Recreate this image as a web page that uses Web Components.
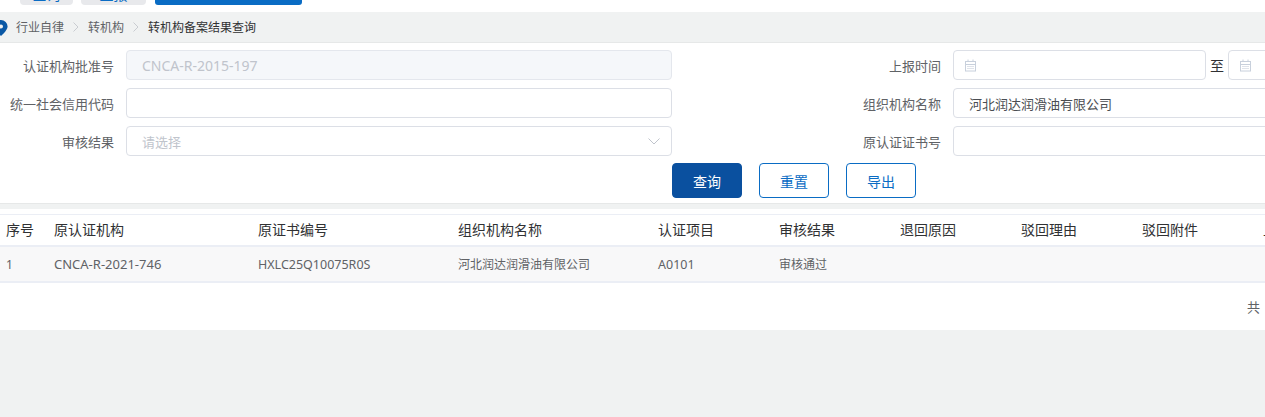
<!DOCTYPE html>
<html lang="zh">
<head>
<meta charset="utf-8">
<title>转机构备案结果查询</title>
<style>
  html, body { margin: 0; padding: 0; height: 100%; overflow: hidden; background: #f0f2f2; }
</style>
</head>
<body>
<result-page></result-page>
<script>
const FONT = '"Noto Sans", "Noto Sans CJK SC", sans-serif';

class TopTabs extends HTMLElement {
  constructor() {
    super();
    this.attachShadow({ mode: "open" }).innerHTML = `
      <style>
        :host { display: flex; height: 12px; background: #fff; padding-left: 20px; overflow: hidden; }
        .tab { display: flex; align-items: flex-end; justify-content: center; width: 53px; height: 5px; margin-right: 8px; overflow: hidden; background: #e8e9ec; border-radius: 0 0 4px 4px; color: #0a6cc4; font-size: 14px; line-height: 14px; white-space: nowrap; }
        .tab.wide { width: 65px; margin-right: 9px; }
        .tab.active { width: 147px; background: #0a6cc4; color: #fff; font-size: 12px; border-radius: 0 0 3px 3px; }
        .tab span { flex: none; margin-bottom: 3px; }
      </style>
      <div class="tab"><span>查询</span></div>
      <div class="tab wide"><span>上报</span></div>
      <div class="tab active"><span>转机构备案结果查询</span></div>
    `;
  }
}

class BreadCrumb extends HTMLElement {
  constructor() {
    super();
    const chevron = `<svg width="6" height="10" viewBox="0 0 6 10"><path d="M.5 .5 5 5 .5 9.500" fill="none" stroke="#c9ccd1"/></svg>`;
    this.attachShadow({ mode: "open" }).innerHTML = `
      <style>
        :host { display: flex; align-items: center; height: 31px; box-sizing: border-box; background: #f0f2f2; font-size: 12px; color: #606266; border-bottom: 1px solid #e6e8e8; position: relative; padding-left: 16px; }
        svg.pin { position: absolute; left: -6px; top: 8px; }
        .sep { margin: 0 9px; display: flex; }
        .last { color: #303133; }
      </style>
      <svg class="pin" width="14" height="16" viewBox="0 0 14 16"><path fill-rule="evenodd" d="M7 0a6.600 6.600 0 0 1 6.600 6.600C13.600 10.500 7 16 7 16S.4 10.500 .4 6.600A6.600 6.600 0 0 1 7 0Zm0 4.500a2 2 0 1 0 0 4 2 2 0 0 0 0-4Z" fill="#0a58a5"/></svg>
      <span>行业自律</span><span class="sep">${chevron}</span><span>转机构</span><span class="sep">${chevron}</span><span class="last">转机构备案结果查询</span>
    `;
  }
}

class FormRow extends HTMLElement {
  constructor() {
    super();
    this.attachShadow({ mode: "open" }).innerHTML = `
      <style>
        :host { display: grid; grid-template-columns: 114px 546px 257px 1fr; column-gap: 12px; align-items: center; height: 30px; }
        .label { text-align: right; color: #606266; font-size: 13px; white-space: nowrap; }
      </style>
      <div class="label"><slot name="l1"></slot></div>
      <slot name="f1"></slot>
      <div class="label"><slot name="l2"></slot></div>
      <slot name="f2"></slot>
    `;
  }
}

class TextField extends HTMLElement {
  constructor() {
    super();
    this.attachShadow({ mode: "open" }).innerHTML = `
      <style>
        :host { display: flex; align-items: center; justify-content: space-between; box-sizing: border-box; width: 100%; height: 30px; min-width: 0; padding: 0 15px; overflow: hidden; border: 1px solid #dcdfe6; border-radius: 4px; background: #fff; font-size: 13px; color: #4a4d52; white-space: nowrap; }
        :host([disabled]) { background: #f5f7fa; border-color: #e4e7ed; color: #c0c4cc; font-size: 14px; }
        :host([select]) { padding-right: 11px; }
        :host([wide]) { width: 400px; }
        .ph { color: #c0c4cc; }
      </style>
      <span id="t"></span><slot></slot>
    `;
  }
  connectedCallback() {
    const t = this.shadowRoot.getElementById("t");
    if (this.hasAttribute("placeholder")) {
      t.className = "ph";
      t.textContent = this.getAttribute("placeholder");
    } else {
      t.textContent = this.getAttribute("value") || "";
    }
  }
}

class DateField extends HTMLElement {
  constructor() {
    super();
    this.attachShadow({ mode: "open" }).innerHTML = `
      <style>
        :host { display: flex; align-items: center; box-sizing: border-box; height: 30px; border: 1px solid #dcdfe6; border-radius: 4px; background: #fff; padding-left: 10px; }
      </style>
      <svg width="13" height="13" viewBox="0 0 13 13" fill="none" stroke="#c8d0dc"><rect x="1.500" y="2.500" width="10" height="9.500"/><path d="M1.500 5.500h10M4 .5v2M9 .5v2"/><path d="M3 7.500h7M3 9.500h7" stroke="#dfe3ea"/></svg>
    `;
  }
}

class DateRange extends HTMLElement {
  constructor() {
    super();
    this.attachShadow({ mode: "open" }).innerHTML = `
      <style>
        :host { display: grid; grid-template-columns: 253px 22px 120px; height: 30px; align-items: center; }
        span { text-align: center; color: #303133; font-size: 14px; }
      </style>
      <date-field></date-field><span>至</span><date-field></date-field>
    `;
  }
}

class AppButton extends HTMLElement {
  constructor() {
    super();
    this.attachShadow({ mode: "open" }).innerHTML = `
      <style>
        :host { display: flex; align-items: center; justify-content: center; box-sizing: border-box; width: 70px; height: 35px; border: 1px solid #0a6cc4; border-radius: 4px; background: #fff; color: #0a6cc4; font-size: 14px; }
        :host([primary]) { background: #0a509f; border-color: #0a509f; color: #fff; }
      </style>
      <slot></slot>
    `;
  }
}

class SearchPanel extends HTMLElement {
  constructor() {
    super();
    this.attachShadow({ mode: "open" }).innerHTML = `
      <style>
        :host { display: flex; flex-direction: column; gap: 7px; box-sizing: border-box; height: 161px; padding-top: 7px; background: #fff; border-bottom: 1px solid #e6e8e8; }
        .rows { display: flex; flex-direction: column; gap: 8px; }
        .actions { display: flex; gap: 17px; padding-left: 672px; }
      </style>
      <div class="rows">
        <form-row>
          <span slot="l1">认证机构批准号</span>
          <text-field slot="f1" disabled value="CNCA-R-2015-197"></text-field>
          <span slot="l2">上报时间</span>
          <date-range slot="f2"></date-range>
        </form-row>
        <form-row>
          <span slot="l1">统一社会信用代码</span>
          <text-field slot="f1"></text-field>
          <span slot="l2">组织机构名称</span>
          <text-field slot="f2" wide value="河北润达润滑油有限公司"></text-field>
        </form-row>
        <form-row>
          <span slot="l1">审核结果</span>
          <text-field slot="f1" select placeholder="请选择"><svg width="12" height="7" viewBox="0 0 12 7"><path d="M.5 .5 6 6l5.500-5.500" fill="none" stroke="#c0c4cc"/></svg></text-field>
          <span slot="l2">原认证证书号</span>
          <text-field slot="f2" wide></text-field>
        </form-row>
      </div>
      <div class="actions">
        <app-button primary>查询</app-button>
        <app-button>重置</app-button>
        <app-button>导出</app-button>
      </div>
    `;
  }
}

class ResultTable extends HTMLElement {
  constructor() {
    super();
    const cols = ["序号","原认证机构","原证书编号","组织机构名称","认证项目","审核结果","退回原因","驳回理由","驳回附件","上"];
    const row = [
      ["1"], ["CNCA-R-2021-746", "org"], ["HXLC25Q10075R0S", "code"], ["河北润达润滑油有限公司"],
      ["A0101", "code"], ["审核通过"], [""], [""], [""], [""],
    ];
    const tpl = "48px 204px 200px 200px 121px 121px 121px 121px 121px 1fr";
    this.attachShadow({ mode: "open" }).innerHTML = `
      <style>
        :host { display: block; background: #fff; padding-top: 5px; }
        .r { display: grid; grid-template-columns: ${tpl}; align-items: center; box-sizing: border-box; padding-left: 6px; overflow: hidden; white-space: nowrap; }
        .head { height: 33px; padding-bottom: 2px; border-top: 1px solid #ebeef5; border-bottom: 2px solid #ebeef5; font-size: 14px; color: #303133; }
        .body { height: 36px; background: #f8f8f9; border-bottom: 2px solid #ebeef5; font-size: 12px; color: #606266; }
        .org { font-size: 13px; }
        .code { font-size: 12.5px; }
        .foot { display: flex; justify-content: flex-end; align-items: center; box-sizing: border-box; height: 47px; padding-right: 5px; font-size: 13px; color: #606266; }
      </style>
      <div class="r head">${cols.map(c => `<span>${c}</span>`).join("")}</div>
      <div class="r body">${row.map(([c, cls]) => `<span class="${cls || ""}">${c}</span>`).join("")}</div>
      <div class="foot"><span>共</span></div>
    `;
  }
}

class ResultPage extends HTMLElement {
  constructor() {
    super();
    this.attachShadow({ mode: "open" }).innerHTML = `
      <style>
        :host { display: block; font-family: ${FONT}; overflow: hidden; }
        .gap { height: 5px; background: #f0f2f2; }
      </style>
      <top-tabs></top-tabs>
      <bread-crumb></bread-crumb>
      <search-panel></search-panel>
      <div class="gap"></div>
      <result-table></result-table>
    `;
  }
}

customElements.define("top-tabs", TopTabs);
customElements.define("bread-crumb", BreadCrumb);
customElements.define("form-row", FormRow);
customElements.define("text-field", TextField);
customElements.define("date-field", DateField);
customElements.define("date-range", DateRange);
customElements.define("app-button", AppButton);
customElements.define("search-panel", SearchPanel);
customElements.define("result-table", ResultTable);
customElements.define("result-page", ResultPage);
</script>
</body>
</html>
